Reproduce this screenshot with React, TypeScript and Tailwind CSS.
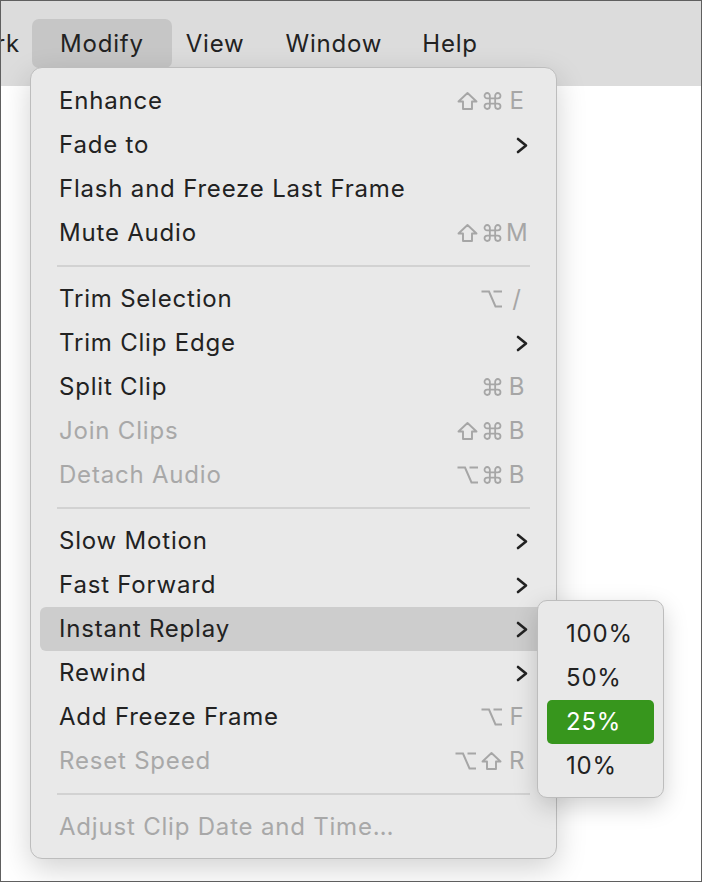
import React from 'react';

type Item =
  | { kind: 'sep' }
  | { kind: 'item'; label: string; shortcut?: string[]; sub?: boolean; disabled?: boolean; active?: boolean };

const menuItems: Item[] = [
  { kind: 'item', label: 'Enhance', shortcut: ['shift', 'cmd', 'E'] },
  { kind: 'item', label: 'Fade to', sub: true },
  { kind: 'item', label: 'Flash and Freeze Last Frame' },
  { kind: 'item', label: 'Mute Audio', shortcut: ['shift', 'cmd', 'M'] },
  { kind: 'sep' },
  { kind: 'item', label: 'Trim Selection', shortcut: ['opt', '/'] },
  { kind: 'item', label: 'Trim Clip Edge', sub: true },
  { kind: 'item', label: 'Split Clip', shortcut: ['cmd', 'B'] },
  { kind: 'item', label: 'Join Clips', shortcut: ['shift', 'cmd', 'B'], disabled: true },
  { kind: 'item', label: 'Detach Audio', shortcut: ['opt', 'cmd', 'B'], disabled: true },
  { kind: 'sep' },
  { kind: 'item', label: 'Slow Motion', sub: true },
  { kind: 'item', label: 'Fast Forward', sub: true },
  { kind: 'item', label: 'Instant Replay', sub: true, active: true },
  { kind: 'item', label: 'Rewind', sub: true },
  { kind: 'item', label: 'Add Freeze Frame', shortcut: ['opt', 'F'] },
  { kind: 'item', label: 'Reset Speed', shortcut: ['opt', 'shift', 'R'], disabled: true },
  { kind: 'sep' },
  { kind: 'item', label: 'Adjust Clip Date and Time…', disabled: true },
];

const speeds = ['100%', '50%', '25%', '10%'];

const Chevron = () => (
  <svg width="12" height="17" viewBox="0 0 12 17" className="text-[#222]">
    <polyline points="2,2 10,8.5 2,15" fill="none" stroke="currentColor" strokeWidth="2.6" strokeLinecap="round" strokeLinejoin="round" />
  </svg>
);

// modifier key glyphs (⇧ ⌘ ⌥)
const ModIcon: React.FC<{ name: string }> = ({ name }) => {
  if (name === 'shift')
    return (
      <svg width="21" height="20" viewBox="0 0 21 20" fill="none" stroke="currentColor" strokeWidth="1.9" strokeLinejoin="round">
        <path d="M10.5 2L19.5 10.5H15V18H6V10.5H1.5Z" />
      </svg>
    );
  if (name === 'cmd')
    return (
      <svg width="19" height="20" viewBox="0 0 20 20" fill="none" stroke="currentColor" strokeWidth="1.9">
        <path d="M7.2 4.4V15.6A2.8 2.8 0 1 1 4.4 12.8H15.6A2.8 2.8 0 1 1 12.8 15.6V4.4A2.8 2.8 0 1 1 15.6 7.2H4.4A2.8 2.8 0 1 1 7.2 4.4Z" />
      </svg>
    );
  return (
    <svg width="21" height="20" viewBox="0 0 21 20" fill="none" stroke="currentColor" strokeWidth="2" strokeLinejoin="miter">
      <path d="M0.5 2.5H8L14.5 17.5H21M12.5 2.5H21" />
    </svg>
  );
};

const Shortcut: React.FC<{ keys: string[] }> = ({ keys }) => {
  const mods = keys.slice(0, -1);
  const key = keys[keys.length - 1];
  return (
    <span className="flex items-center text-[#a6a6a6]">
      <span className="flex items-center gap-[5px]">
        {mods.map((m, i) => (
          <ModIcon key={i} name={m} />
        ))}
      </span>
      <span className="ml-[4px] w-[22px] text-center">{key}</span>
    </span>
  );
};

const MenuRow: React.FC<{ item: Extract<Item, { kind: 'item' }> }> = ({ item }) => (
  <div
    className={`mx-[9px] h-[44px] pl-[19px] pr-[19px] flex items-center justify-between rounded-[6px] ${
      item.active ? 'bg-[#cdcdcd]' : ''
    } ${item.disabled ? 'text-[#a8a8a8]' : 'text-[#222]'}`}
  >
    <span>{item.label}</span>
    {item.shortcut && <Shortcut keys={item.shortcut} />}
    {item.sub && <Chevron />}
  </div>
);

export default function App() {
  return (
    <div className="relative w-[702px] h-[882px] bg-white border border-[#5f5f5f] overflow-hidden font-['Inter','Noto_Sans',sans-serif] text-[24px] tracking-[0.8px]">
      <div className="h-[85px] bg-[#dcdcdc] flex items-center text-[#222]">
        <span className="w-[19px] flex justify-end overflow-hidden">
          <span className="shrink-0">Work</span>
        </span>
        <span className="ml-[12px] h-[49px] px-[28px] flex items-center rounded-[7px] bg-[#c6c6c6]">Modify</span>
        <span className="ml-[14px]">View</span>
        <span className="ml-[41px]">Window</span>
        <span className="ml-[40px]">Help</span>
      </div>

      <div className="absolute left-[29px] top-[66px] w-[527px] pt-[11px] pb-[9px] bg-[#e9e9e9] border border-[#bdbdbd] rounded-[12px] shadow-[0_10px_30px_rgba(0,0,0,0.18)]">
        {menuItems.map((item, i) =>
          item.kind === 'sep' ? (
            <div key={i} className="h-[22px] flex items-center px-[26px]">
              <div className="h-[2px] w-full bg-[#d2d2d2]" />
            </div>
          ) : (
            <MenuRow key={i} item={item} />
          )
        )}
      </div>

      <div className="absolute left-[536px] top-[599px] w-[127px] pt-[11px] pb-[9px] bg-[#e9e9e9] border border-[#bdbdbd] rounded-[10px] shadow-[0_8px_24px_rgba(0,0,0,0.18)]">
        {speeds.map((s) => (
          <div
            key={s}
            className={`mx-[9px] h-[44px] pl-[19px] flex items-center rounded-[5px] ${
              s === '25%' ? 'bg-[#37961d] text-white' : 'text-[#222]'
            }`}
          >
            {s}
          </div>
        ))}
      </div>
    </div>
  );
}
